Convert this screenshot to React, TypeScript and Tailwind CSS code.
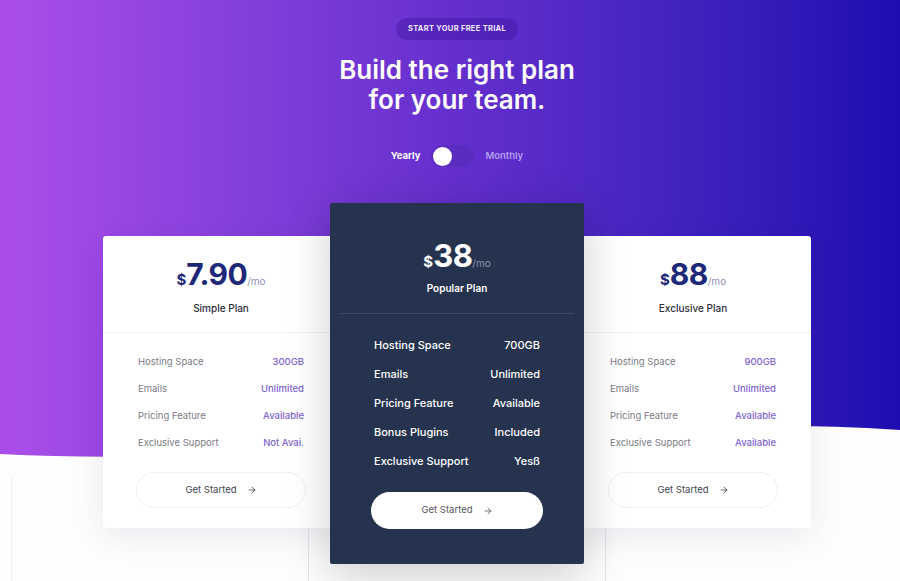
import React from "react";
import { ArrowRight } from "lucide-react";

type Row = { label: string; value: string };

const font = { fontFamily: "Inter, 'Noto Sans', sans-serif" };

function SideCard({ price, name, rows }: { price: string; name: string; rows: Row[] }) {
  return (
    <div className="w-[236px] shrink-0 mt-[33px] bg-white rounded-[3px] shadow-[0_8px_30px_rgba(40,20,90,0.09)] flex flex-col">
      <div className="pt-[20px] pb-[17px] flex flex-col items-center border-b border-[#f1f1f4]">
        <div className="flex items-baseline text-[#1d2878] leading-[36px]">
          <span className="text-[15px] font-bold">$</span>
          <span className="text-[30px] font-bold tracking-[-0.5px]">{price}</span>
          <span className="text-[10px] text-[#8d8fb8]">/mo</span>
        </div>
        <div className="mt-[2px] text-[10px] leading-[14px] font-medium text-[#2d2d3a]">{name}</div>
      </div>
      <div className="px-[33px] pt-[22px] pb-[20px] flex flex-col">
        <div className="px-[2px] flex flex-col gap-[13px]">
          {rows.map((r) => (
            <div key={r.label} className="flex justify-between text-[9.5px] leading-[14px]">
              <span className="text-[#7a7a85]">{r.label}</span>
              <span className="text-[#8062cf] font-medium">{r.value}</span>
            </div>
          ))}
        </div>
        <button className="mt-[22px] h-[36px] rounded-full border border-[#f0f0f3] bg-white flex items-center justify-center gap-[10px] text-[9.5px] text-[#444450]">
          <span>Get Started</span>
          <ArrowRight size={10} strokeWidth={2} />
        </button>
      </div>
    </div>
  );
}

function MiddleCard({ rows }: { rows: Row[] }) {
  return (
    <div className="relative z-10 w-[254px] shrink-0 -mx-[9px] bg-[#26334f] rounded-[2px] shadow-[0_10px_45px_rgba(0,0,0,0.2)] flex flex-col">
      <div className="pt-[35px] flex flex-col items-center">
        <div className="flex items-baseline text-white leading-[36px]">
          <span className="text-[15px] font-bold">$</span>
          <span className="text-[31px] font-bold tracking-[-0.5px]">38</span>
          <span className="text-[10px] text-[#8b94ae]">/mo</span>
        </div>
        <div className="text-[10px] leading-[14px] font-semibold text-white">Popular Plan</div>
      </div>
      <div className="mx-[10px] mt-[18px] h-px bg-[#3e4b68]" />
      <div className="px-[41px] pt-[23px] pb-[35px] flex flex-col">
        <div className="px-[3px] flex flex-col gap-[13px]">
          {rows.map((r) => (
            <div key={r.label} className="flex justify-between text-[11px] leading-[16px] font-medium text-white">
              <span>{r.label}</span>
              <span>{r.value}</span>
            </div>
          ))}
        </div>
        <button className="mt-[23px] h-[37px] rounded-full bg-white flex items-center justify-center gap-[10px] text-[9.5px] text-[#555560]">
          <span>Get Started</span>
          <ArrowRight size={10} strokeWidth={2} />
        </button>
      </div>
    </div>
  );
}

export default function App() {
  return (
    <div
      className="relative w-[900px] h-[581px] overflow-hidden bg-gradient-to-r from-[#ab4ee9] via-[#652fce] to-[#1e0cb0]"
      style={font}
    >
      <svg className="absolute inset-0 z-0" width="900" height="581" viewBox="0 0 900 581">
        <path d="M0,454 C300,470 600,410 900,430 L900,581 L0,581 Z" fill="#fdfdfd" />
        <line x1="11.5" y1="477" x2="11.5" y2="581" stroke="#efeff2" strokeWidth="1" />
        <line x1="308.5" y1="529" x2="308.5" y2="581" stroke="#e6e6ea" strokeWidth="1" />
        <line x1="605.5" y1="529" x2="605.5" y2="581" stroke="#e6e6ea" strokeWidth="1" />
      </svg>
      <div className="relative z-10 flex flex-col items-center pt-[18px] pl-[14px]">
        <div className="h-[22px] px-[12px] rounded-full bg-[rgba(55,15,150,0.35)] flex items-center">
          <span className="text-[7.5px] font-bold tracking-[0.3px] text-[#efe6ff] uppercase">Start your free trial</span>
        </div>
        <h1 className="mt-[15px] text-center text-[26px] leading-[30px] font-semibold text-white">
          Build the right plan
          <br />
          for your team.
        </h1>
        <div className="mt-[30px] flex items-center">
          <span className="text-[9.5px] font-bold text-white">Yearly</span>
          <div className="ml-[11px] w-[43px] h-[22px] rounded-full bg-[#5a2dc0] flex items-center px-[2px]">
            <div className="w-[19px] h-[19px] rounded-full bg-white" />
          </div>
          <span className="ml-[11px] text-[9.5px] font-semibold text-[#b49df0]">Monthly</span>
        </div>
        <div className="mt-[36px] self-start ml-[89px] flex items-start">
          <SideCard
            price="7.90"
            name="Simple Plan"
            rows={[
              { label: "Hosting Space", value: "300GB" },
              { label: "Emails", value: "Unlimited" },
              { label: "Pricing Feature", value: "Available" },
              { label: "Exclusive Support", value: "Not Avai." },
            ]}
          />
          <MiddleCard
            rows={[
              { label: "Hosting Space", value: "700GB" },
              { label: "Emails", value: "Unlimited" },
              { label: "Pricing Feature", value: "Available" },
              { label: "Bonus Plugins", value: "Included" },
              { label: "Exclusive Support", value: "Yesß" },
            ]}
          />
          <SideCard
            price="88"
            name="Exclusive Plan"
            rows={[
              { label: "Hosting Space", value: "900GB" },
              { label: "Emails", value: "Unlimited" },
              { label: "Pricing Feature", value: "Available" },
              { label: "Exclusive Support", value: "Available" },
            ]}
          />
        </div>
      </div>
    </div>
  );
}
